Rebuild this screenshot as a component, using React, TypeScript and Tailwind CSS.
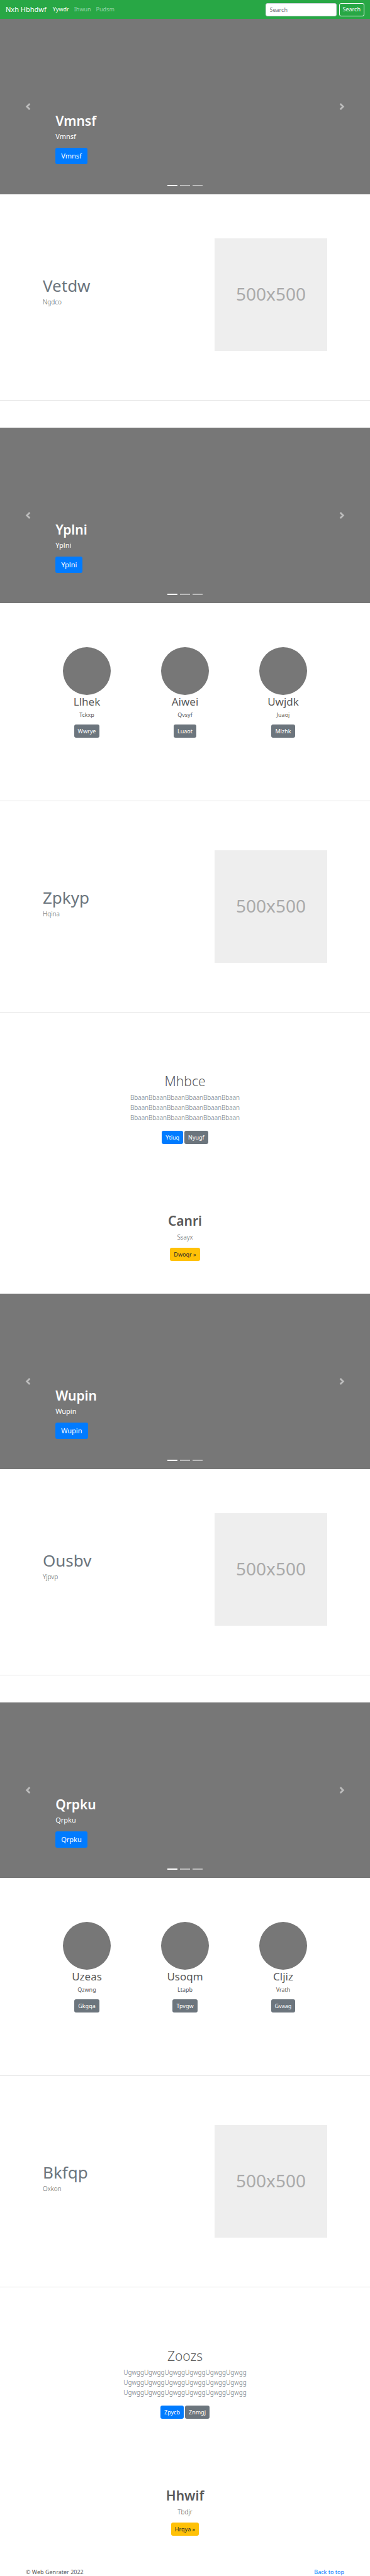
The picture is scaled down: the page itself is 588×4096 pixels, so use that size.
import React from "react";

type Item = { title: string; text: string; action: string };

function NavBar() {
  return (
    <nav className="flex h-[30px] items-center bg-[#28a745] px-[9px] text-[9px] text-white">
      <a href="#" className="text-[11px]">Nxh Hbhdwf</a>
      <div className="ml-[10px] flex flex-1 gap-2">
        <a href="#">Yywdr</a>
        <a href="#" className="text-white/50">Ihwun</a>
        <a href="#" className="text-white/50">Pudsm</a>
      </div>
      <form className="flex gap-1" onSubmit={(e) => e.preventDefault()}>
        <input
          type="search"
          aria-label="Search"
          placeholder="Search"
          className="h-[21px] w-[113px] rounded-[3px] border border-[#ced4da] bg-white px-[6px] text-[9px] text-[#495057] placeholder:text-[#6c757d]"
        />
        <button className="h-[21px] rounded-[3px] border border-[#f8f9fa] px-[5px] text-[9px] text-[#f8f9fa]">
          Search
        </button>
      </form>
    </nav>
  );
}

function Arrow({ next = false }: { next?: boolean }) {
  return (
    <button
      aria-label={next ? "Next" : "Previous"}
      className={
        next
          ? "absolute inset-y-0 right-0 flex w-[15%] items-center justify-center text-white/50"
          : "absolute inset-y-0 left-0 flex w-[15%] items-center justify-center text-white/50"
      }
    >
      <svg viewBox="0 0 8 8" className="size-[11px]" fill="currentColor">
        {next ? (
          <path d="M2.75 0l-1.5 1.5 2.5 2.5-2.5 2.5 1.5 1.5 4-4-4-4z" />
        ) : (
          <path d="M5.25 0l-4 4 4 4 1.5-1.5-2.5-2.5 2.5-2.5-1.5-1.5z" />
        )}
      </svg>
    </button>
  );
}

function Carousel({ title }: { title: string }) {
  return (
    <section className="relative mb-[35px] flex flex-col bg-[#777] px-[15%] pt-[149px] pb-[13px] text-white">
      <h1 className="mb-1 text-[21px] leading-[26px] font-semibold">{title}</h1>
      <p className="mb-[10px] text-[11px] leading-4">{title}</p>
      <a
        href="#"
        className="mb-[33px] flex h-[26px] items-center self-start rounded-[3px] bg-[#007bff] px-[9px] text-[11px]"
      >
        {title}
      </a>
      <div className="flex justify-center gap-1">
        <span className="h-[2px] w-4 bg-white" />
        <span className="h-[2px] w-4 bg-white/50" />
        <span className="h-[2px] w-4 bg-white/50" />
      </div>
      <Arrow />
      <Arrow next />
    </section>
  );
}

function Divider() {
  return <hr className="my-[43px] h-px border-0 bg-[#e5e5e5]" />;
}

function Featurette({ title, text }: { title: string; text: string }) {
  return (
    <section className="grid grid-cols-12 px-[60px] py-[35px]">
      <div className="col-span-7 self-center px-2">
        <h2 className="mb-1 text-[26px] leading-7 text-[#6c757d]">{title}</h2>
        <p className="mb-[9px] text-[10px] leading-4 font-light">{text}</p>
      </div>
      <div className="col-span-5 px-2">
        <div className="flex aspect-square items-center justify-center bg-[#eee] pb-1 text-[28px] text-[#aaa]">
          500x500
        </div>
      </div>
    </section>
  );
}

const buttonBase = "flex h-[21px] items-center rounded-[3px] px-[6px] text-[9px]";

function Columns({ items }: { items: Item[] }) {
  return (
    <section className="grid grid-cols-3 px-[60px] pt-[35px] pb-[57px]">
      {items.map((item) => (
        <div key={item.title} className="flex flex-col items-center">
          <div className="size-[76px] rounded-full bg-[#777]" />
          <h2 className="mb-1 text-[17px] leading-[21px]">{item.title}</h2>
          <p className="mb-[9px] text-[9px] leading-[13px]">{item.text}</p>
          <a href="#" className={`${buttonBase} bg-[#6c757d] text-white`}>{item.action}</a>
        </div>
      ))}
    </section>
  );
}

function Pitch({ title, line, primary, secondary }: { title: string; line: string; primary: string; secondary: string }) {
  return (
    <section className="flex flex-col items-center pt-[53px] pb-[54px] text-center">
      <h1 className="mb-[5px] text-[21px] leading-[26px] font-light">{title}</h1>
      <p className="mb-[13px] text-[10px] leading-4 font-light text-[#6c757d]">
        {line}<br />{line}<br />{line}
      </p>
      <div className="flex gap-[2px]">
        <a href="#" className={`${buttonBase} bg-[#007bff] text-white`}>{primary}</a>
        <a href="#" className={`${buttonBase} bg-[#6c757d] text-white`}>{secondary}</a>
      </div>
    </section>
  );
}

function Closing({ title, text, action }: Item) {
  return (
    <section className="flex flex-col items-center pt-[55px] pb-[52px] text-center">
      <h1 className="mb-[5px] text-[21px] leading-[26px] font-semibold">{title}</h1>
      <p className="mb-[9px] text-[10px] leading-4 font-light">{text}</p>
      <a href="#" className={`${buttonBase} bg-[#ffc107] text-[#212529]`}>{action} »</a>
    </section>
  );
}

export default function App() {
  return (
    <div className="bg-white font-['Noto_Sans',sans-serif] text-[#5a5a5a]">
      <NavBar />
      <main>
        <Carousel title="Vmnsf" />
        <Featurette title="Vetdw" text="Ngdco" />
        <Divider />
        <Carousel title="Yplni" />
        <Columns
          items={[
            { title: "Llhek", text: "Tckxp", action: "Wwrye" },
            { title: "Aiwei", text: "Qvsyf", action: "Luaot" },
            { title: "Uwjdk", text: "Juaoj", action: "Mlzhk" },
          ]}
        />
        <Divider />
        <Featurette title="Zpkyp" text="Hqina" />
        <Divider />
        <Pitch title="Mhbce" line="BbaanBbaanBbaanBbaanBbaanBbaan" primary="Ytiuq" secondary="Nyugf" />
        <Closing title="Canri" text="Ssayx" action="Dwoqr" />
        <Carousel title="Wupin" />
        <Featurette title="Ousbv" text="Yjpvp" />
        <Divider />
        <Carousel title="Qrpku" />
        <Columns
          items={[
            { title: "Uzeas", text: "Qzwng", action: "Gkgqa" },
            { title: "Usoqm", text: "Ltapb", action: "Tpvgw" },
            { title: "Cljiz", text: "Vrath", action: "Gvaag" },
          ]}
        />
        <Divider />
        <Featurette title="Bkfqp" text="Oxkon" />
        <Divider />
        <Pitch title="Zoozs" line="UgwggUgwggUgwggUgwggUgwggUgwgg" primary="Zpycb" secondary="Znmgj" />
        <Closing title="Hhwif" text="Tbdjr" action="Hrqya" />
      </main>
      <footer className="flex justify-between px-[41px] text-[9px] leading-3">
        <p>© Web Genrater 2022</p>
        <a href="#" className="text-[#007bff]">Back to top</a>
      </footer>
    </div>
  );
}
